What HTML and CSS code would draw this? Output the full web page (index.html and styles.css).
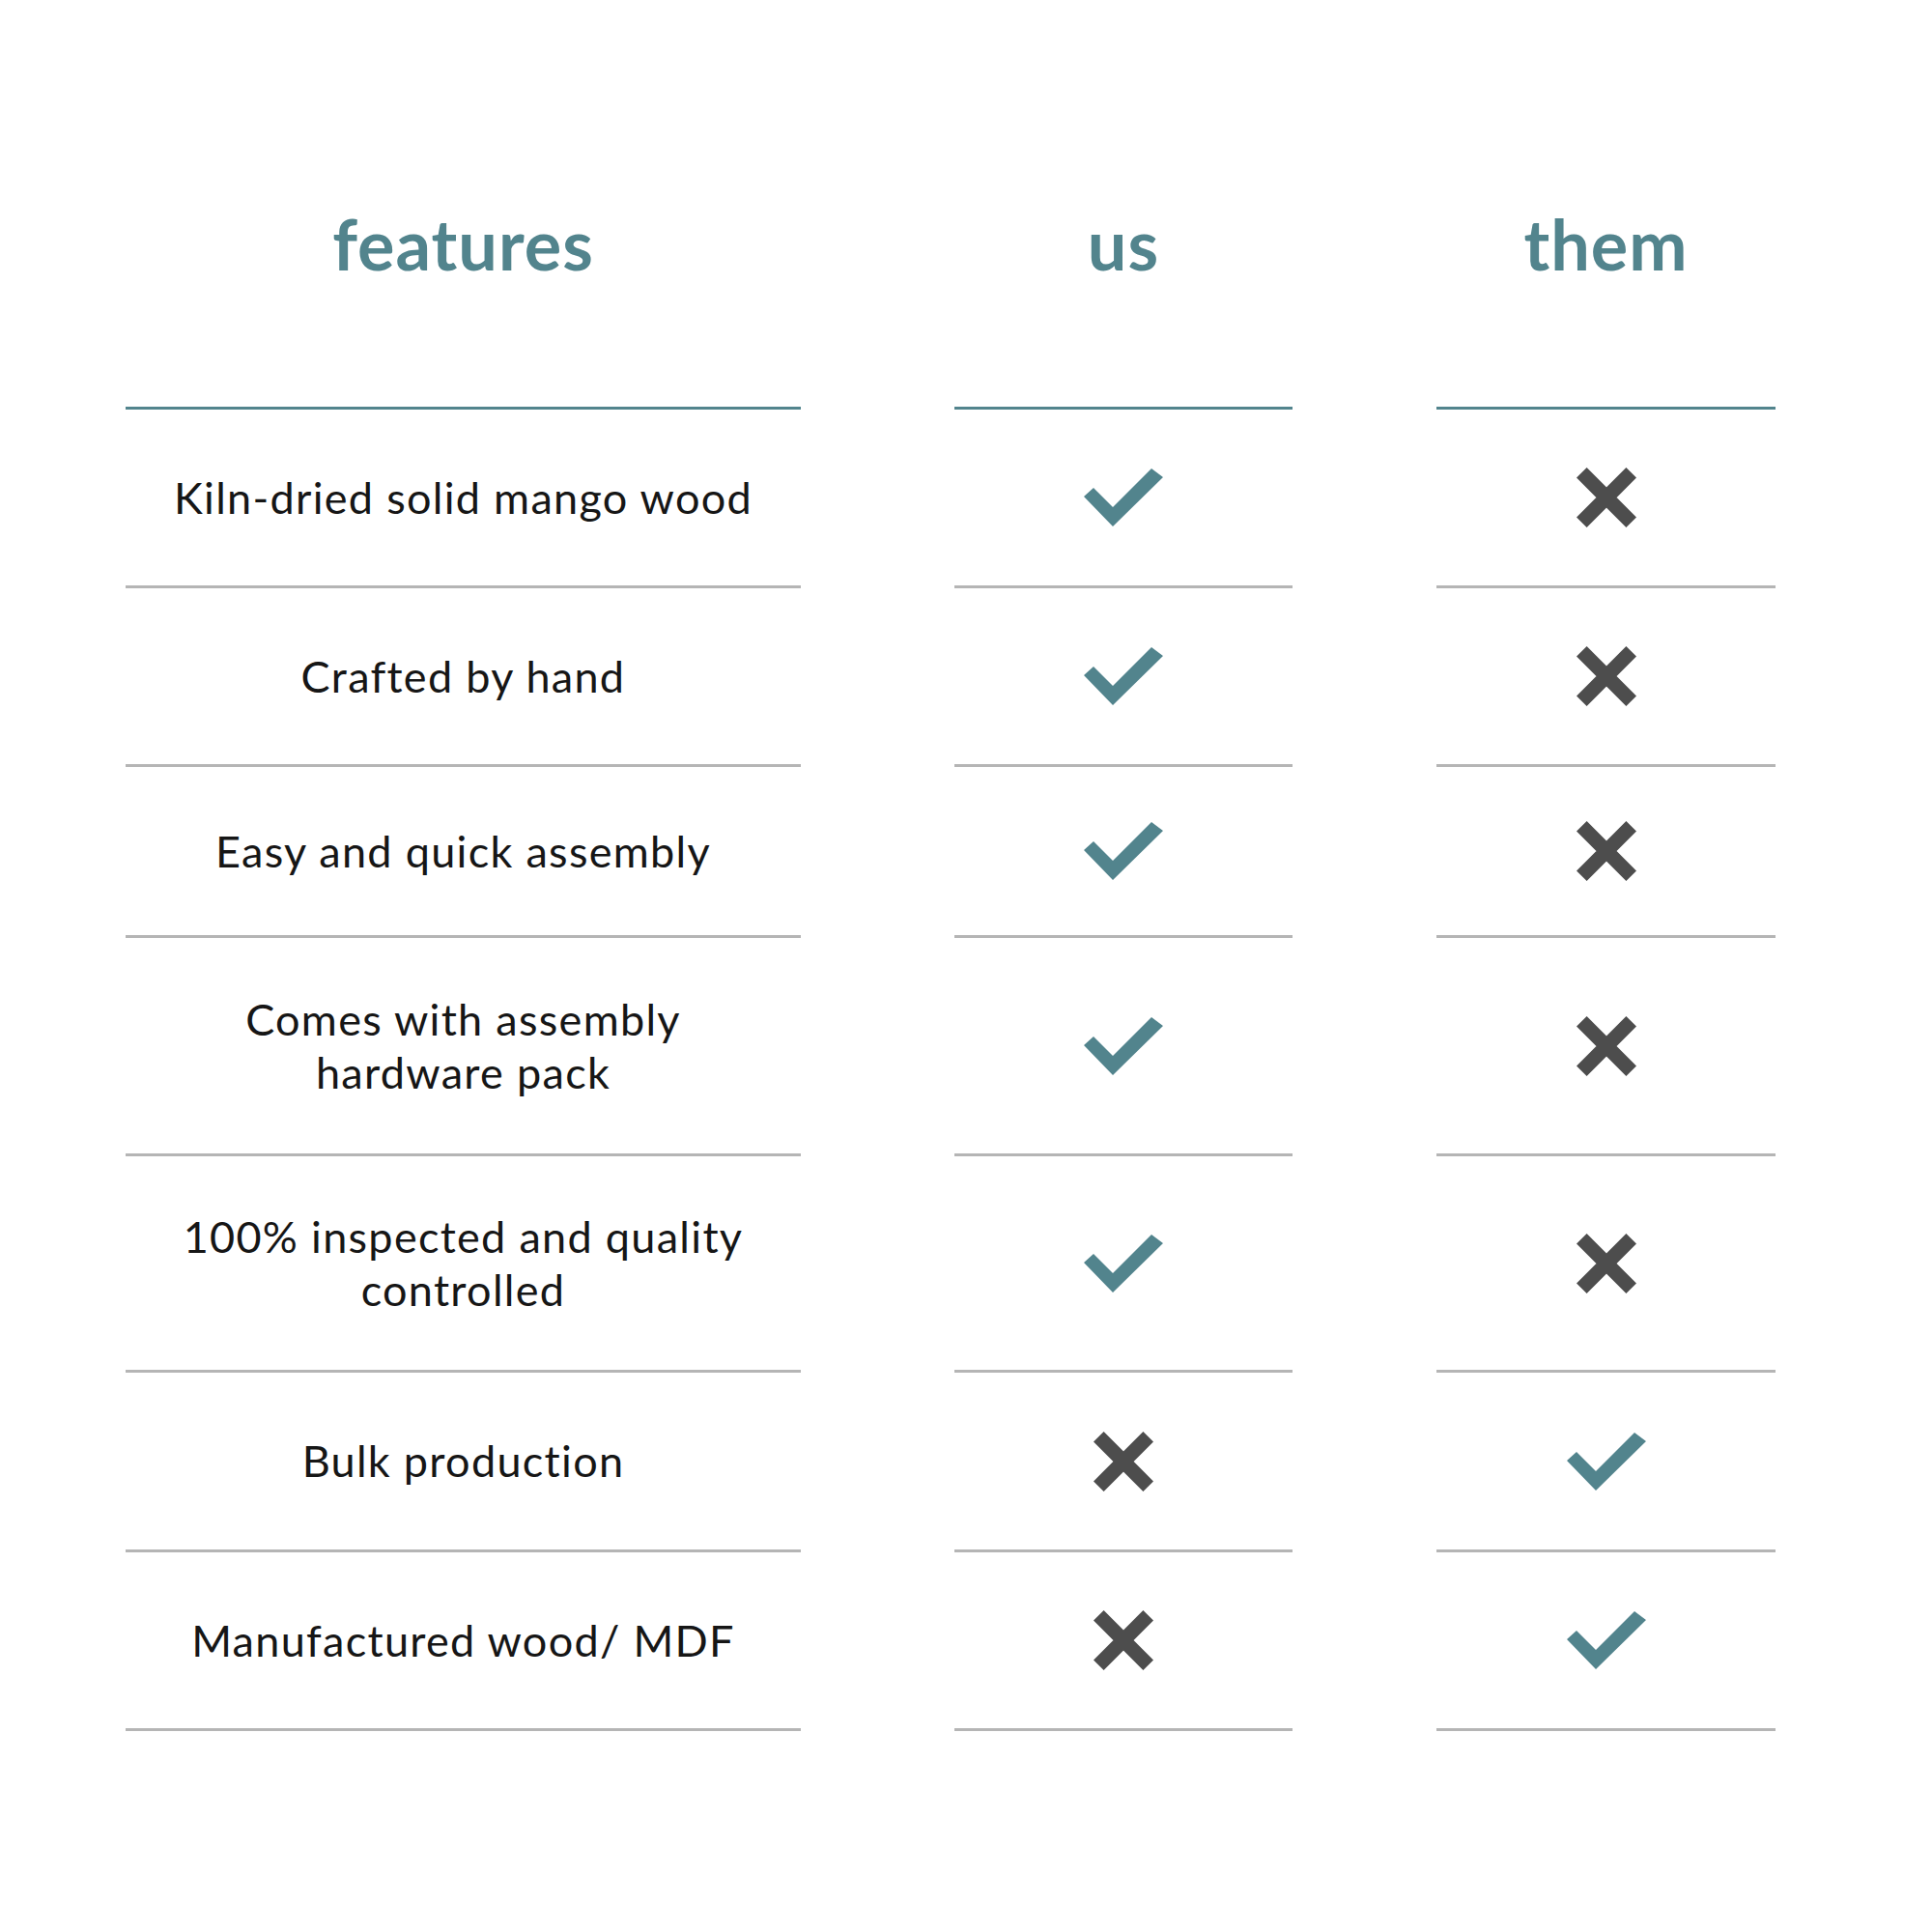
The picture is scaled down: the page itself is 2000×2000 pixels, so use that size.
FILE: index.html
```html
<!DOCTYPE html>
<html>
<head>
<meta charset="utf-8">
<link rel="stylesheet" href="styles.css">
</head>
<body>
<div class="table">
  <div class="row head">
    <div class="cell c-feat">features</div>
    <div class="cell c-us">us</div>
    <div class="cell c-them">them</div>
  </div>

  <div class="row r185">
    <div class="cell c-feat">Kiln-dried solid mango wood</div>
    <div class="cell c-us"><svg class="ico-check" viewBox="0 0 82 60"><polygon points="0,29 10,20 30,40 70,0 82,9 30,60"/></svg></div>
    <div class="cell c-them"><svg class="ico-x" viewBox="0 0 62 62"><path d="M5.3 5.3 L56.7 56.7 M56.7 5.3 L5.3 56.7"/></svg></div>
  </div>

  <div class="row r185">
    <div class="cell c-feat">Crafted by hand</div>
    <div class="cell c-us"><svg class="ico-check" viewBox="0 0 82 60"><polygon points="0,29 10,20 30,40 70,0 82,9 30,60"/></svg></div>
    <div class="cell c-them"><svg class="ico-x" viewBox="0 0 62 62"><path d="M5.3 5.3 L56.7 56.7 M56.7 5.3 L5.3 56.7"/></svg></div>
  </div>

  <div class="row r177">
    <div class="cell c-feat">Easy and quick assembly</div>
    <div class="cell c-us"><svg class="ico-check" viewBox="0 0 82 60"><polygon points="0,29 10,20 30,40 70,0 82,9 30,60"/></svg></div>
    <div class="cell c-them"><svg class="ico-x" viewBox="0 0 62 62"><path d="M5.3 5.3 L56.7 56.7 M56.7 5.3 L5.3 56.7"/></svg></div>
  </div>

  <div class="row r226">
    <div class="cell c-feat">Comes with assembly<br>hardware pack</div>
    <div class="cell c-us"><svg class="ico-check" viewBox="0 0 82 60"><polygon points="0,29 10,20 30,40 70,0 82,9 30,60"/></svg></div>
    <div class="cell c-them"><svg class="ico-x" viewBox="0 0 62 62"><path d="M5.3 5.3 L56.7 56.7 M56.7 5.3 L5.3 56.7"/></svg></div>
  </div>

  <div class="row r224">
    <div class="cell c-feat">100% inspected and quality<br>controlled</div>
    <div class="cell c-us"><svg class="ico-check" viewBox="0 0 82 60"><polygon points="0,29 10,20 30,40 70,0 82,9 30,60"/></svg></div>
    <div class="cell c-them"><svg class="ico-x" viewBox="0 0 62 62"><path d="M5.3 5.3 L56.7 56.7 M56.7 5.3 L5.3 56.7"/></svg></div>
  </div>

  <div class="row r186">
    <div class="cell c-feat">Bulk production</div>
    <div class="cell c-us"><svg class="ico-x" viewBox="0 0 62 62"><path d="M5.3 5.3 L56.7 56.7 M56.7 5.3 L5.3 56.7"/></svg></div>
    <div class="cell c-them"><svg class="ico-check" viewBox="0 0 82 60"><polygon points="0,29 10,20 30,40 70,0 82,9 30,60"/></svg></div>
  </div>

  <div class="row r185">
    <div class="cell c-feat">Manufactured wood/ MDF</div>
    <div class="cell c-us"><svg class="ico-x" viewBox="0 0 62 62"><path d="M5.3 5.3 L56.7 56.7 M56.7 5.3 L5.3 56.7"/></svg></div>
    <div class="cell c-them"><svg class="ico-check" viewBox="0 0 82 60"><polygon points="0,29 10,20 30,40 70,0 82,9 30,60"/></svg></div>
  </div>
</div>
</body>
</html>
```

FILE: styles.css
```css
html, body {
  margin: 0;
  padding: 0;
  background: #ffffff;
}

body {
  width: 2000px;
  height: 2000px;
  font-family: "Lato", "Liberation Sans", sans-serif;
  color: #161616;
}

.table {
  display: flex;
  flex-direction: column;
  padding-left: 130px;
}

.row {
  display: flex;
}

.cell {
  box-sizing: border-box;
  display: flex;
  align-items: center;
  justify-content: center;
  text-align: center;
  border-bottom: 3px solid #b5b5b5;
  font-size: 45px;
  line-height: 55px;
  letter-spacing: 1.3px;
}

.c-feat { width: 699px; }
.c-us { width: 350px; margin-left: 159px; }
.c-them { width: 351px; margin-left: 149px; }

.head .cell {
  height: 424px;
  align-items: flex-start;
  padding-top: 212px;
  font-size: 72px;
  line-height: 80px;
  letter-spacing: 1px;
  font-weight: 700;
  color: #52848d;
  border-bottom-color: #52848d;
}

.r185 .cell { height: 185px; }
.r177 .cell { height: 177px; }
.r186 .cell { height: 186px; }
.r224 .cell { height: 224px; }
.r226 .cell { height: 226px; }

.ico-check {
  width: 82px;
  height: 60px;
  fill: #52848d;
}

.ico-x {
  width: 62px;
  height: 62px;
  fill: none;
  stroke: #4d4d4d;
  stroke-width: 15;
}
```
